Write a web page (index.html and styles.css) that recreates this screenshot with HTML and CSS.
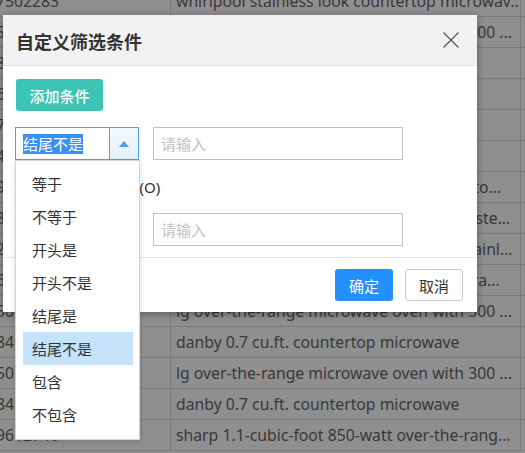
FILE: index.html
```html
<!DOCTYPE html>
<html>
<head>
<meta charset="utf-8">
<link rel="stylesheet" href="styles.css">
</head>
<body>
<div class="grid">
  <div class="row"><div class="c1">7502283</div><div class="c2">whirlpool stainless look countertop microwav...</div><div class="c3"></div></div>
  <div class="row"><div class="c1">5031284</div><div class="c2">lg over-the-range microwave oven with 300 ...</div><div class="c3"></div></div>
  <div class="row"><div class="c1">8412907</div><div class="c2">danby 0.7 cu.ft. countertop microwave</div><div class="c3"></div></div>
  <div class="row"><div class="c1">6629014</div><div class="c2">sharp carousel countertop microwave</div><div class="c3"></div></div>
  <div class="row"><div class="c1">7311852</div><div class="c2">danby 0.7 cu.ft. countertop microwave</div><div class="c3"></div></div>
  <div class="row"><div class="c1">4820193</div><div class="c2">panasonic 1.2 cu. ft. microwave oven</div><div class="c3"></div></div>
  <div class="row"><div class="c1">9038271</div><div class="c2">frigidaire 1.6 cu. ft. stainless red counterto...</div><div class="c3"></div></div>
  <div class="row"><div class="c1">3175520</div><div class="c2">magic chef 0.9 cu ft microwave stainless ste...</div><div class="c3"></div></div>
  <div class="row"><div class="c1">2284316</div><div class="c2">ge 1.6 cu ft over-the-range microwave stainl...</div><div class="c3"></div></div>
  <div class="row"><div class="c1">6147093</div><div class="c2">whirlpool 1.9 cu. ft. microwave over-the-ra...</div><div class="c3"></div></div>
  <div class="row"><div class="c1">5063127</div><div class="c2">lg over-the-range microwave oven with 300 ...</div><div class="c3"></div></div>
  <div class="row"><div class="c1">8490215</div><div class="c2">danby 0.7 cu.ft. countertop microwave</div><div class="c3"></div></div>
  <div class="row"><div class="c1">5071938</div><div class="c2">lg over-the-range microwave oven with 300 ...</div><div class="c3"></div></div>
  <div class="row"><div class="c1">8436601</div><div class="c2">danby 0.7 cu.ft. countertop microwave</div><div class="c3"></div></div>
  <div class="row"><div class="c1">9612740</div><div class="c2">sharp 1.1-cubic-foot 850-watt over-the-rang...</div><div class="c3"></div></div>
</div>

<div class="mask"></div>

<div class="modal">
  <div class="modal-head">
    <span class="modal-title">自定义筛选条件</span>
    <span class="close">
      <svg width="16" height="16" viewBox="0 0 16 16"><path d="M0.5 0.5 L15.5 15.5 M15.5 0.5 L0.5 15.5" stroke="#555" stroke-width="1.3" fill="none"/></svg>
    </span>
  </div>
  <div class="modal-body">
    <button class="btn-add">添加条件</button>
    <div class="cond-row">
      <div class="select is-open">
        <div class="select-value"><span class="sel-text">结尾不是</span></div>
        <div class="select-arrow">
          <svg width="10" height="6" viewBox="0 0 10 6"><path d="M0 6 L5 0 L10 6 Z" fill="#4a9df5"/></svg>
        </div>
        <ul class="dropdown">
          <li>等于</li>
          <li>不等于</li>
          <li>开头是</li>
          <li>开头不是</li>
          <li>结尾是</li>
          <li class="active">结尾不是</li>
          <li>包含</li>
          <li>不包含</li>
        </ul>
      </div>
      <div class="input"><span class="ph">请输入</span></div>
    </div>
    <div class="logic-row">
      <label class="radio"><span class="dot"></span>且(A)</label>
      <label class="radio"><span class="dot"></span>或(O)</label>
    </div>
    <div class="cond-row">
      <div class="select">
        <div class="select-value"><span>等于</span></div>
        <div class="select-arrow">
          <svg width="10" height="6" viewBox="0 0 10 6"><path d="M0 0 L10 0 L5 6 Z" fill="#999"/></svg>
        </div>
      </div>
      <div class="input"><span class="ph">请输入</span></div>
    </div>
  </div>
  <div class="modal-foot">
    <button class="btn-ok">确定</button>
    <button class="btn-cancel">取消</button>
  </div>
</div>
</body>
</html>
```

FILE: styles.css
```css
html, body {
  margin: 0;
  padding: 0;
}
body {
  width: 525px;
  height: 453px;
  overflow: hidden;
  position: relative;
  background: #fff;
  font-family: "Noto Sans", "Noto Sans CJK SC", sans-serif;
}

/* background table */
.grid {
  margin-top: -14px;
}
.row {
  display: grid;
  grid-template-columns: 170px 350px 1fr;
  height: 31px;
  box-sizing: border-box;
  border-bottom: 1px solid #dcdcdc;
}
.row > div {
  font-size: 15.75px;
  line-height: 30px;
  color: #666;
  white-space: nowrap;
  overflow: hidden;
  box-sizing: border-box;
}
.c1 {
  text-indent: -4px;
}
.c2 {
  border-left: 1px solid #dcdcdc;
  padding: 0 1px 0 5px;
}
.c3 {
  border-left: 1px solid #dcdcdc;
}

.mask {
  position: absolute;
  inset: 0;
  background: rgba(0, 0, 0, 0.44);
}

/* modal */
.modal {
  position: absolute;
  left: 3px;
  top: 15px;
  width: 474px;
  background: #fff;
  box-shadow: 0 2px 8px rgba(0, 0, 0, 0.35);
  font-family: "Noto Sans CJK SC", sans-serif;
  color: #333;
}
.modal-head {
  height: 51px;
  box-sizing: border-box;
  background: #f2f2f2;
  border-bottom: 1px solid #e3e3e3;
  display: flex;
  align-items: center;
  justify-content: space-between;
  padding: 0 18px 0 13px;
}
.modal-title {
  font-size: 18px;
  font-weight: bold;
  color: #333;
  padding-top: 2px;
}
.close {
  display: flex;
  width: 16px;
  height: 16px;
}

.modal-body {
  padding: 13px 0 11px 12px;
}
.btn-add {
  margin-left: 1px;
  width: 87px;
  height: 32px;
  border: none;
  border-radius: 3px;
  background: #3cc4b4;
  color: #fff;
  font-family: "Noto Sans CJK SC", sans-serif;
  font-size: 15px;
  font-weight: 500;
  padding: 0;
  display: block;
}
.cond-row {
  display: flex;
  gap: 14px;
}
.modal-body > .cond-row:first-of-type {
  margin-top: 16px;
}
.select {
  position: relative;
  width: 124px;
  height: 33px;
  box-sizing: border-box;
  border: 1px solid #c4c8d0;
  display: flex;
  font-size: 15px;
}
.select.is-open {
  border-color: #4d9ff7;
  z-index: 5;
}
.select-value {
  flex: 1;
  display: flex;
  align-items: center;
  padding-left: 7px;
}
.sel-text {
  background: #3a8ef5;
  color: #fff;
  line-height: 20px;
}
.select-arrow {
  width: 28px;
  border-left: 1px solid #c4c8d0;
  display: flex;
  align-items: center;
  justify-content: center;
}
.is-open .select-arrow {
  border-left-color: #4d9ff7;
  background: linear-gradient(#f2f8ff, #e6f1fd);
}
.input {
  width: 250px;
  height: 33px;
  box-sizing: border-box;
  border: 1px solid #bcc3cf;
  display: flex;
  align-items: center;
  padding-left: 7px;
  font-size: 15px;
}
.ph {
  color: #c2c2c2;
}

.dropdown {
  position: absolute;
  left: -1px;
  top: 32px;
  width: 125px;
  box-sizing: border-box;
  margin: 0;
  padding: 6px 6px 8px 7px;
  list-style: none;
  background: #fff;
  border: 1px solid #d3d3d3;
  box-shadow: 0 2px 6px rgba(0, 0, 0, 0.15);
}
.dropdown li {
  height: 33px;
  line-height: 33px;
  padding-left: 9px;
  font-size: 15px;
  color: #333;
}
.dropdown li.active {
  background: #c6e3fc;
}

.logic-row {
  height: 53px;
  display: flex;
  align-items: center;
  font-family: "Noto Sans", "Noto Sans CJK SC", sans-serif;
  font-size: 15px;
  color: #333;
}
.radio {
  display: flex;
  align-items: center;
  gap: 5px;
}
.radio + .radio {
  margin-left: 38px;
}
.dot {
  width: 14px;
  height: 14px;
  box-sizing: border-box;
  border: 1px solid #bbb;
  border-radius: 50%;
}

.modal-foot {
  border-top: 1px solid #e6e6e6;
  padding: 11px 14px 11px 0;
  display: flex;
  justify-content: flex-end;
  gap: 12px;
}
.modal-foot button {
  width: 58px;
  height: 32px;
  border-radius: 3px;
  font-family: "Noto Sans CJK SC", sans-serif;
  font-size: 15px;
  padding: 0;
}
.btn-ok {
  background: #2490fb;
  border: none;
  color: #fff;
}
.btn-cancel {
  background: #fff;
  border: 1px solid #c5c9d0;
  color: #333;
}
```
